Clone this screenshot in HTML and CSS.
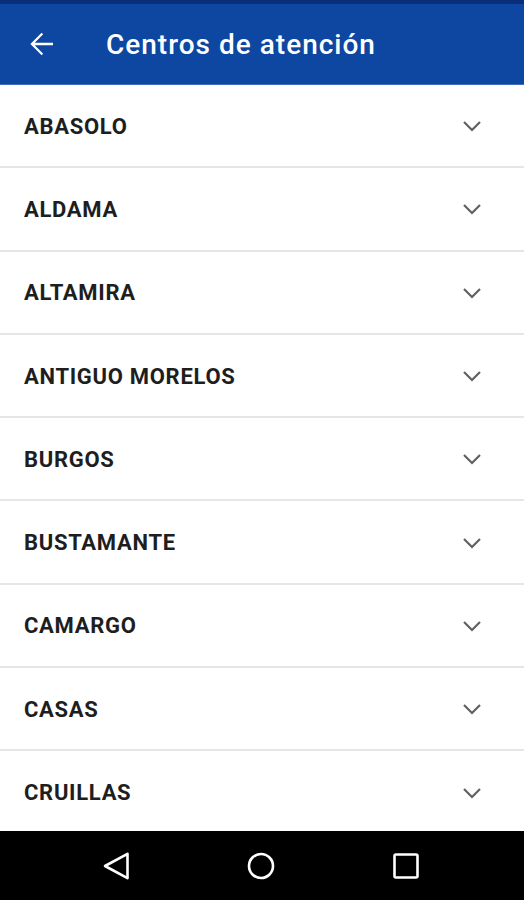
FILE: index.html
```html
<!DOCTYPE html>
<html lang="es">
<head>
<meta charset="utf-8">
<link rel="stylesheet" href="styles.css">
</head>
<body>
<div class="screen">
  <div class="statusbar"></div>
  <header class="appbar">
    <svg class="back" viewBox="0 0 24 24" width="36" height="36"><path d="M20 11.1H7.83l5.59-5.59L12.4 4.5 4.9 12l7.5 7.5 1.02-1.01L7.83 12.9H20z" fill="#fff"/></svg>
    <h1 class="title">Centros de atención</h1>
  </header>
  <main class="list">
    <div class="row"><span class="name">ABASOLO</span><svg class="chev" viewBox="0 0 20 12" width="20" height="12"><path d="M2 2l8 8 8-8" fill="none" stroke="#616161" stroke-width="2.2"/></svg></div>
    <div class="row"><span class="name">ALDAMA</span><svg class="chev" viewBox="0 0 20 12" width="20" height="12"><path d="M2 2l8 8 8-8" fill="none" stroke="#616161" stroke-width="2.2"/></svg></div>
    <div class="row"><span class="name">ALTAMIRA</span><svg class="chev" viewBox="0 0 20 12" width="20" height="12"><path d="M2 2l8 8 8-8" fill="none" stroke="#616161" stroke-width="2.2"/></svg></div>
    <div class="row"><span class="name">ANTIGUO MORELOS</span><svg class="chev" viewBox="0 0 20 12" width="20" height="12"><path d="M2 2l8 8 8-8" fill="none" stroke="#616161" stroke-width="2.2"/></svg></div>
    <div class="row"><span class="name">BURGOS</span><svg class="chev" viewBox="0 0 20 12" width="20" height="12"><path d="M2 2l8 8 8-8" fill="none" stroke="#616161" stroke-width="2.2"/></svg></div>
    <div class="row"><span class="name">BUSTAMANTE</span><svg class="chev" viewBox="0 0 20 12" width="20" height="12"><path d="M2 2l8 8 8-8" fill="none" stroke="#616161" stroke-width="2.2"/></svg></div>
    <div class="row"><span class="name">CAMARGO</span><svg class="chev" viewBox="0 0 20 12" width="20" height="12"><path d="M2 2l8 8 8-8" fill="none" stroke="#616161" stroke-width="2.2"/></svg></div>
    <div class="row"><span class="name">CASAS</span><svg class="chev" viewBox="0 0 20 12" width="20" height="12"><path d="M2 2l8 8 8-8" fill="none" stroke="#616161" stroke-width="2.2"/></svg></div>
    <div class="row"><span class="name">CRUILLAS</span><svg class="chev" viewBox="0 0 20 12" width="20" height="12"><path d="M2 2l8 8 8-8" fill="none" stroke="#616161" stroke-width="2.2"/></svg></div>
  </main>
  <nav class="navbar">
    <svg class="nav-ic" viewBox="0 0 28 28" width="28" height="28"><path d="M25.5 1.8L3 14l22.5 12.2z" fill="none" stroke="#fff" stroke-width="2.6" stroke-linejoin="round"/></svg>
    <svg class="nav-ic" viewBox="0 0 28 28" width="28" height="28"><circle cx="14" cy="14" r="12" fill="none" stroke="#fff" stroke-width="2.6"/></svg>
    <svg class="nav-ic" viewBox="0 0 28 28" width="28" height="28"><rect x="2.5" y="2.5" width="23" height="23" rx="1.5" fill="none" stroke="#fff" stroke-width="2.6"/></svg>
  </nav>
</div>
</body>
</html>
```
FILE: styles.css
```css
* { box-sizing: border-box; }
html, body { margin: 0; padding: 0; }
body { font-family: Roboto, "Liberation Sans", sans-serif; background: #fff; }
.screen { width: 524px; height: 900px; display: flex; flex-direction: column; overflow: hidden; }
.statusbar { height: 4px; background: #0b2e78; flex: none; }
.appbar {
  height: 81px; flex: none; background: #0d47a1;
  display: flex; align-items: center; padding-left: 23px;
  border-bottom: 1px solid #3d6cc0;
}
.back { flex: none; }
.title { margin: 0 0 0 47px; color: #fff; font-size: 28px; font-weight: 500; letter-spacing: 1px; }
.list { flex: 1; overflow: hidden; }
.row {
  height: 83.3px; display: flex; align-items: center; justify-content: space-between;
  padding: 1px 42px 0 24px; border-bottom: 2px solid #e6e6e6;
}
.name { font-size: 22px; font-weight: 700; color: #1e1e1e; letter-spacing: 0.7px; }
.chev { flex: none; }
.navbar {
  height: 69px; flex: none; background: #000;
  display: flex; align-items: center; justify-content: space-between;
  padding: 0 104px 0 102px;
}
```
